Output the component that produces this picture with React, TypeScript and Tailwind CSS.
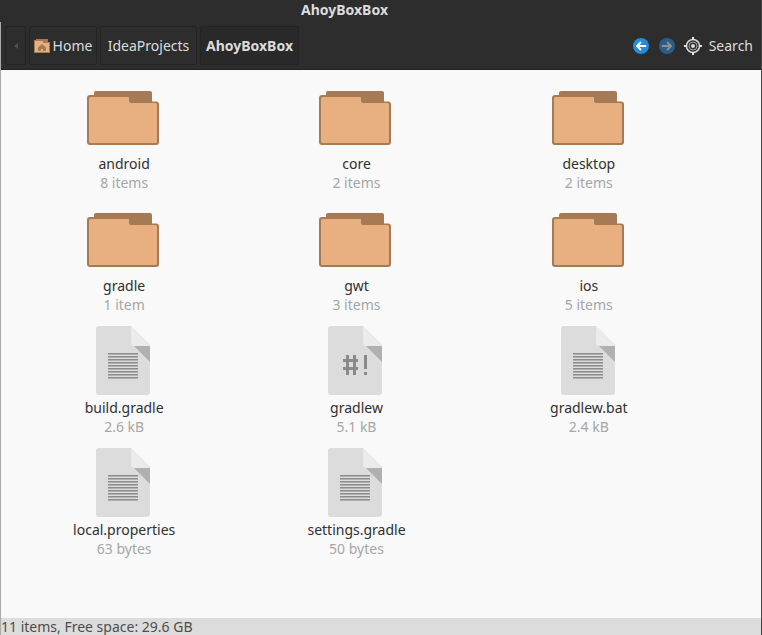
type Kind = "folder" | "text" | "script";

interface Entry {
  name: string;
  detail: string;
  kind: Kind;
}

const entries: Entry[] = [
  { name: "android", detail: "8 items", kind: "folder" },
  { name: "core", detail: "2 items", kind: "folder" },
  { name: "desktop", detail: "2 items", kind: "folder" },
  { name: "gradle", detail: "1 item", kind: "folder" },
  { name: "gwt", detail: "3 items", kind: "folder" },
  { name: "ios", detail: "5 items", kind: "folder" },
  { name: "build.gradle", detail: "2.6 kB", kind: "text" },
  { name: "gradlew", detail: "5.1 kB", kind: "script" },
  { name: "gradlew.bat", detail: "2.4 kB", kind: "text" },
  { name: "local.properties", detail: "63 bytes", kind: "text" },
  { name: "settings.gradle", detail: "50 bytes", kind: "text" },
];

function FolderIcon() {
  return (
    <svg viewBox="0 0 72 72" className="mr-0.5 size-[72px]" aria-hidden="true">
      <path
        fill="#a57a54"
        d="M9 9h54q2 0 2 2v8.500h4q3 0 3 3v37.500q0 3-3 3H3q-3 0-3-3V16q0-3 3-3h4v-2q0-2 2-2z"
      />
      <path
        fill="#e8b080"
        d="M3.500 15h38.500v4q0 2 2 2h24.500q1.500 0 1.500 1.500v37q0 1.500-1.500 1.500H3.500q-1.500 0-1.500-1.500V16.500q0-1.500 1.500-1.500z"
      />
    </svg>
  );
}

const lineRows = [27, 30, 33, 36, 39, 42, 45, 48, 51];

function FileIcon({ kind }: { kind: Kind }) {
  return (
    <svg viewBox="0 0 72 72" className="mr-0.5 size-[72px]" aria-hidden="true">
      <path fill="#dcdcdc" d="M12 0h32l19 19v47q0 3-3 3H12q-3 0-3-3V3q0-3 3-3z" />
      <path fill="#ebebeb" d="M44 0l19 20H47q-3 0-3-3z" />
      <path fill="#b0b0b0" d="M47 20h16v16z" />
      {kind === "script" ? (
        <g fill="#8a8a8a">
          <path d="M27 29h3v20h-3zM34 29h3v20h-3zM24 33h15v3H24zM24 41h15v3H24z" />
          <path d="M45 29h3v14h-3zM45 46h3v3h-3z" />
        </g>
      ) : (
        lineRows.map((y) => (
          <g key={y}>
            <rect x="21" y={y} width="30" height="1" fill="#8c8c8c" />
            <rect x="21" y={y + 1} width="30" height="1" fill="#b0b0b0" />
          </g>
        ))
      )}
    </svg>
  );
}

function HomeIcon() {
  return (
    <svg viewBox="0 0 16 16" className="size-4" aria-hidden="true">
      <path fill="#a57a54" d="M2 1h12v3h2v11H0V2h2z" />
      <path fill="#e8b080" d="M1 3h8v2h6v9H1z" />
      <path fill="#a57a54" d="M8 6l4.500 4H12v3H9v-2H7v2H4v-3h-.5z" />
    </svg>
  );
}

function ArrowIcon({ forward }: { forward?: boolean }) {
  return (
    <svg viewBox="0 0 16 16" className="size-4" aria-hidden="true">
      <circle cx="8" cy="8" r="8" fill={forward ? "#2b5d85" : "#268bd8"} />
      <path
        d={forward ? "M3.500 8h8M8.500 4.500L12 8l-3.500 3.500" : "M12.500 8h-8M7.500 4.500L4 8l3.500 3.500"}
        fill="none"
        stroke={forward ? "#8b9298" : "#ffffff"}
        strokeWidth="1.800"
        strokeLinecap="round"
        strokeLinejoin="round"
      />
    </svg>
  );
}

function TargetIcon() {
  return (
    <svg viewBox="0 0 18 18" className="size-[18px]" aria-hidden="true">
      <g fill="none" stroke="#d8d8d8">
        <circle cx="9" cy="9" r="6.500" strokeWidth="1.500" />
        <circle cx="9" cy="9" r="4" strokeWidth="1" stroke="#a8a8a8" />
      </g>
      <circle cx="9" cy="9" r="2" fill="#d8d8d8" />
      <path fill="#e4e4e4" d="M8 0h2v3H8zM8 15h2v3H8zM0 8h3v2H0zM15 8h3v2h-3z" />
    </svg>
  );
}

const crumb =
  "flex h-[39px] items-center rounded-xs border border-[#242424] whitespace-nowrap";

export default function App() {
  return (
    <div className="flex min-h-screen flex-col border-r border-[#454545] bg-[#2d2d2d] font-['Noto_Sans','Open_Sans',sans-serif] text-sm text-[#dcdcdc]">
      <header className="flex h-[22px] items-start justify-center pr-[72px]">
        <h1 className="text-sm leading-5 font-bold">AhoyBoxBox</h1>
      </header>
      <div className="flex grow flex-col border-l border-[#aaaaaa]">
        <div className="flex h-12 items-center justify-between border-b border-[#222222] pr-2 pl-1">
          <nav aria-label="Path" className="flex gap-[3px]">
            <button type="button" aria-label="Scroll path left" className={`${crumb} w-[21px] justify-center`}>
              <svg viewBox="0 0 4 6" className="h-1.5 w-1" aria-hidden="true">
                <path fill="#505050" d="M4 0v6L0 3z" />
              </svg>
            </button>
            <button type="button" className={`${crumb} w-[68px] justify-center gap-[3px]`}>
              <HomeIcon />
              Home
            </button>
            <button type="button" className={`${crumb} w-[97px] justify-center`}>
              IdeaProjects
            </button>
            <button
              type="button"
              aria-current="page"
              className={`${crumb} w-[99px] justify-center bg-[#292929] font-bold`}
            >
              AhoyBoxBox
            </button>
          </nav>
          <div className="flex items-center">
            <button type="button" aria-label="Back" className="mr-2.5">
              <ArrowIcon />
            </button>
            <button type="button" aria-label="Forward" disabled className="mr-[9px]">
              <ArrowIcon forward />
            </button>
            <button type="button" className="flex items-center gap-[7px]">
              <TargetIcon />
              Search
            </button>
          </div>
        </div>
        <main className="grow bg-[#f9f9f9] pt-3 pr-14 pb-3 pl-[7px]">
          <ul className="grid grid-cols-3 gap-y-3">
            {entries.map((entry) => (
              <li key={entry.name} className="flex justify-center">
                <button type="button" className="flex flex-col items-center leading-[19px]">
                  {entry.kind === "folder" ? <FolderIcon /> : <FileIcon kind={entry.kind} />}
                  <span className="text-[#303030]">{entry.name}</span>
                  <span className="text-[#a6a6a6]">{entry.detail}</span>
                </button>
              </li>
            ))}
          </ul>
        </main>
        <footer className="bg-[#dcdcdc] leading-[17px] text-[#4c4c4c]">
          11 items, Free space: 29.6 GB
        </footer>
      </div>
    </div>
  );
}
